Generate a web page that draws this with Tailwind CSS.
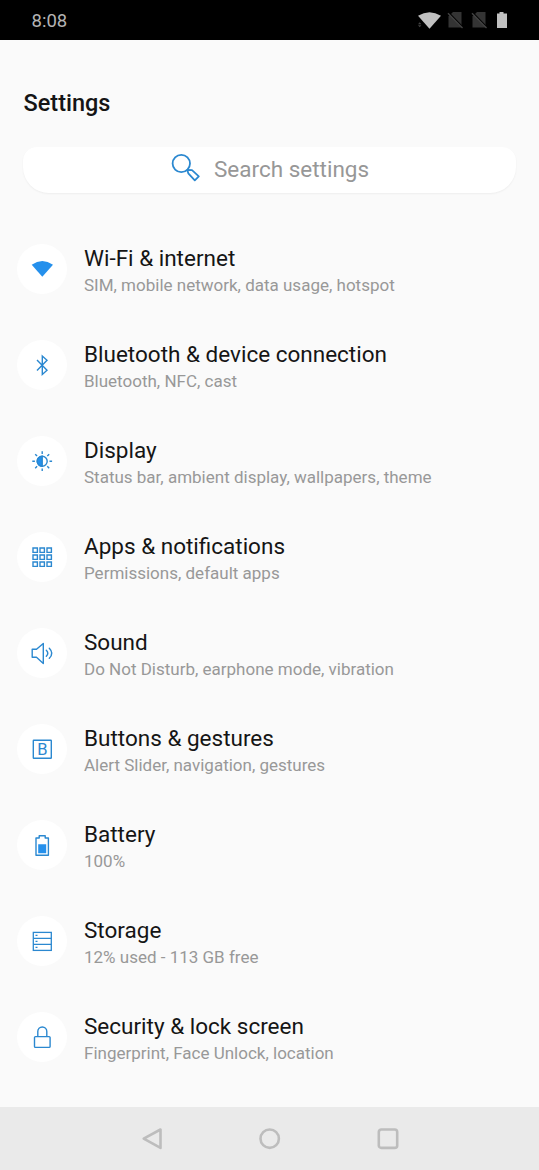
<!DOCTYPE html>
<html lang="en">
<head>
<meta charset="utf-8">
<title>Settings</title>
<script src="https://cdn.jsdelivr.net/npm/@tailwindcss/browser@4"></script>
</head>
<body class="bg-[#fafafa]">
<div class="flex h-[1170px] w-[539px] flex-col overflow-hidden bg-[#fafafa] font-['Roboto',sans-serif]">
  <header class="flex h-10 shrink-0 items-center justify-between bg-black pl-[31.5px] pr-[31px] text-[#b4b4b4]">
    <span class="pt-[2px] text-[18.500px] leading-10">8:08</span>
    <svg class="h-5 w-[92px]" viewBox="0 0 92 20">
      <path d="M2 5.500Q13.500-1.500 25 5.500L13.500 18.500Z" transform="translate(0 .3)" fill="#c0c0c0"/>
      <path d="M2 15.300 3.700 13.200 5.400 15.300ZM2 16.300 3.700 18.300 5.400 16.300Z" transform="translate(0 -1)" fill="#444"/>
      <g><path d="M37 2h8.500v15.500h-13v-11Z" fill="#343434"/><path d="M33.500 3.500 47 17.500" stroke="#000" stroke-width="1.800"/><path d="M32 3.300 46.500 18" stroke="#444" stroke-width="1.300"/></g>
      <g transform="translate(24 0)"><path d="M37 2h8.500v15.500h-13v-11Z" fill="#343434"/><path d="M33.500 3.500 47 17.500" stroke="#000" stroke-width="1.800"/><path d="M32 3.300 46.500 18" stroke="#444" stroke-width="1.300"/></g>
      <path d="M83.500 2h4v1.500h3.500v14.500h-10v-14.500h2.500Z" fill="#c0c0c0"/>
    </svg>
  </header>

  <h1 class="mt-[47px] ml-[23.5px] h-8 shrink-0 text-[23.500px] leading-8 font-medium text-[#151515]">Settings</h1>

  <div class="mx-[23px] mt-[28px] flex h-[46px] shrink-0 items-center rounded-t-[14px] rounded-b-[26px] bg-white pl-[147px] shadow-[0_1px_2px_rgba(0,0,0,0.05)]">
    <svg class="mb-[2px] h-8 w-8 shrink-0" viewBox="0 0 32 32" fill="none" stroke="#2b88d0" stroke-width="1.800" stroke-linejoin="round">
      <circle cx="11.300" cy="10.500" r="8.700"/>
      <path d="M17.300 17 18.300 20.300 24.800 27.300 28.800 23.300 22 17.200Z"/>
    </svg>
    <span class="ml-3 pb-[3px] text-[22.500px] leading-8 text-[#979797]">Search settings</span>
  </div>

  <main class="mt-[28px] flex flex-1 flex-col pl-[17px]">
    <section class="flex h-24 shrink-0 items-center gap-[17px]">
      <svg class="size-[50px] rounded-full bg-white" viewBox="0 0 50 50"><path d="M14.700 20.700Q25.300 13.500 36 20.700L25.300 32.700Z" fill="#2590ec"/></svg>
      <div class="pt-[2px]"><h2 class="text-[22.500px] leading-[30px] text-[#151515]">Wi-Fi &amp; internet</h2><p class="text-[17px] leading-6 text-[#989898]">SIM, mobile network, data usage, hotspot</p></div>
    </section>
    <section class="flex h-24 shrink-0 items-center gap-[17px]">
      <svg class="size-[50px] rounded-full bg-white" viewBox="0 0 50 50" fill="none" stroke="#2b88d0" stroke-width="1.400"><path d="M20 20 30 30.200 25.300 34.500V16L30 20.300 20 30.500"/></svg>
      <div class="pt-[2px]"><h2 class="text-[22.500px] leading-[30px] text-[#151515]">Bluetooth &amp; device connection</h2><p class="text-[17px] leading-6 text-[#989898]">Bluetooth, NFC, cast</p></div>
    </section>
    <section class="flex h-24 shrink-0 items-center gap-[17px]">
      <svg class="size-[50px] rounded-full bg-white" viewBox="0 0 50 50" fill="none" stroke="#2b88d0" stroke-width="1.400"><circle cx="25.200" cy="25.200" r="5"/><path d="M25.200 20.200a5 5 0 0 0 0 10Z" fill="#2590ec"/><path d="M25.200 15.300v2.600M25.200 32.500v2.600M15.300 25.200h2.600M32.500 25.200h2.600M18.200 18.200l1.900 1.900M30.300 30.300l1.900 1.900M18.200 32.200l1.900-1.900M30.300 20.100l1.900-1.900"/></svg>
      <div class="pt-[2px]"><h2 class="text-[22.500px] leading-[30px] text-[#151515]">Display</h2><p class="text-[17px] leading-6 text-[#989898]">Status bar, ambient display, wallpapers, theme</p></div>
    </section>
    <section class="flex h-24 shrink-0 items-center gap-[17px]">
      <svg class="size-[50px] rounded-full bg-white" viewBox="0 0 50 50" fill="none" stroke="#2b88d0" stroke-width="1.400"><path d="M16 16h4.400v4.400H16ZM23 16h4.400v4.400H23ZM30 16h4.400v4.400H30ZM16 23h4.400v4.400H16ZM23 23h4.400v4.400H23ZM30 23h4.400v4.400H30ZM16 30h4.400v4.400H16ZM23 30h4.400v4.400H23ZM30 30h4.400v4.400H30Z"/></svg>
      <div class="pt-[2px]"><h2 class="text-[22.500px] leading-[30px] text-[#151515]">Apps &amp; notifications</h2><p class="text-[17px] leading-6 text-[#989898]">Permissions, default apps</p></div>
    </section>
    <section class="flex h-24 shrink-0 items-center gap-[17px]">
      <svg class="size-[50px] rounded-full bg-white" viewBox="0 0 50 50" fill="none" stroke="#2b88d0" stroke-width="1.400" stroke-linejoin="round"><path d="M15.200 21.300h4.300L26.300 15.500v20L19.500 29.300h-4.300Z"/><path d="M29.300 22.300q3 3 0 6M32.300 20.300q5 5 0 10" stroke-linecap="round"/></svg>
      <div class="pt-[2px]"><h2 class="text-[22.500px] leading-[30px] text-[#151515]">Sound</h2><p class="text-[17px] leading-6 text-[#989898]">Do Not Disturb, earphone mode, vibration</p></div>
    </section>
    <section class="flex h-24 shrink-0 items-center gap-[17px]">
      <svg class="size-[50px] rounded-full bg-white" viewBox="0 0 50 50" fill="none" stroke="#2b88d0" stroke-width="1.400"><rect x="16.300" y="16.200" width="18" height="18" rx=".5"/><text x="25.400" y="31" text-anchor="middle" font-family="Roboto" font-size="16.500" fill="#2b88d0" stroke="none">B</text></svg>
      <div class="pt-[2px]"><h2 class="text-[22.500px] leading-[30px] text-[#151515]">Buttons &amp; gestures</h2><p class="text-[17px] leading-6 text-[#989898]">Alert Slider, navigation, gestures</p></div>
    </section>
    <section class="flex h-24 shrink-0 items-center gap-[17px]">
      <svg class="size-[50px] rounded-full bg-white" viewBox="0 0 50 50" fill="none" stroke="#2b88d0" stroke-width="1.400" stroke-linejoin="round"><path d="M19 18h3.200v-2.300h6V18h3.200v17.300H19Z"/><path d="M21.200 24.300h8v9h-8Z" fill="#2590ec" stroke="none"/></svg>
      <div class="pt-[2px]"><h2 class="text-[22.500px] leading-[30px] text-[#151515]">Battery</h2><p class="text-[17px] leading-6 text-[#989898]">100%</p></div>
    </section>
    <section class="flex h-24 shrink-0 items-center gap-[17px]">
      <svg class="size-[50px] rounded-full bg-white" viewBox="0 0 50 50" fill="none" stroke="#2b88d0" stroke-width="1.300"><rect x="16.300" y="16.400" width="18" height="18"/><path d="M16.300 22.400h18M16.300 28.400h18M18.500 19.400h2M18.500 25.400h2M18.500 31.400h2"/></svg>
      <div class="pt-[2px]"><h2 class="text-[22.500px] leading-[30px] text-[#151515]">Storage</h2><p class="text-[17px] leading-6 text-[#989898]">12% used - 113 GB free</p></div>
    </section>
    <section class="flex h-24 shrink-0 items-center gap-[17px]">
      <svg class="size-[50px] rounded-full bg-white" viewBox="0 0 50 50" fill="none" stroke="#2b88d0" stroke-width="1.400"><rect x="17.500" y="24.600" width="15.600" height="10.800" rx="1"/><path d="M20.800 24.500v-5a4.500 4.500 0 0 1 9 0v5"/></svg>
      <div class="pt-[2px]"><h2 class="text-[22.500px] leading-[30px] text-[#151515]">Security &amp; lock screen</h2><p class="text-[17px] leading-6 text-[#989898]">Fingerprint, Face Unlock, location</p></div>
    </section>
  </main>

  <nav class="flex h-[63px] shrink-0 items-center justify-between bg-[#eaeaea] pl-[140px] pr-[139.5px]">
    <svg class="size-6" viewBox="0 0 24 24" fill="none" stroke="#bdbdbd" stroke-width="2.600" stroke-linejoin="round"><path d="M3.700 11.700 20.500 2.500v18.400Z"/></svg>
    <svg class="size-6" viewBox="0 0 24 24" fill="none" stroke="#bdbdbd" stroke-width="2.600"><circle cx="11.700" cy="11.700" r="9.200"/></svg>
    <svg class="size-6" viewBox="0 0 24 24" fill="none" stroke="#bdbdbd" stroke-width="2.600"><rect x="2.800" y="2.500" width="18.400" height="18.400" rx="2.500"/></svg>
  </nav>
</div>
</body>
</html>
